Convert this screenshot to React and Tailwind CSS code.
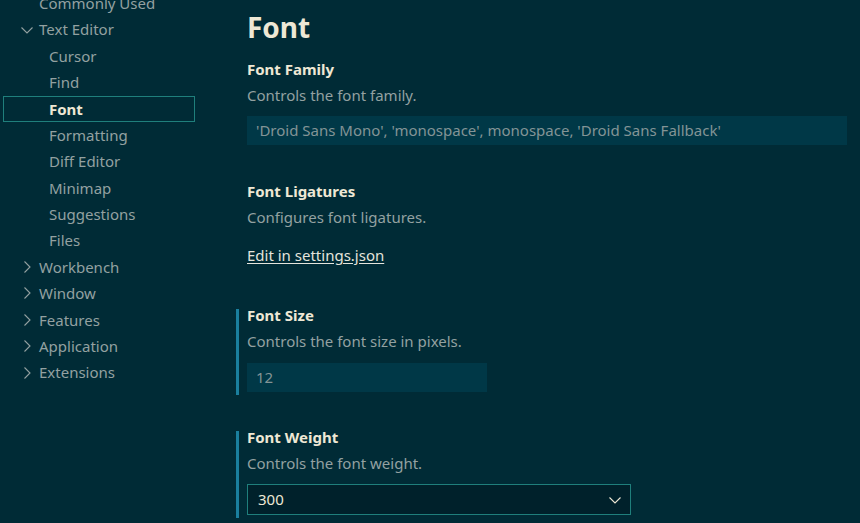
const tree = [
  { label: "Commonly Used", level: 0, chevron: null },
  { label: "Text Editor", level: 0, chevron: "down" },
  { label: "Cursor", level: 1 },
  { label: "Find", level: 1 },
  { label: "Font", level: 1, selected: true },
  { label: "Formatting", level: 1 },
  { label: "Diff Editor", level: 1 },
  { label: "Minimap", level: 1 },
  { label: "Suggestions", level: 1 },
  { label: "Files", level: 1 },
  { label: "Workbench", level: 0, chevron: "right" },
  { label: "Window", level: 0, chevron: "right" },
  { label: "Features", level: 0, chevron: "right" },
  { label: "Application", level: 0, chevron: "right" },
  { label: "Extensions", level: 0, chevron: "right" },
];

function Chevron({ dir, color = "#93a1a1" }) {
  return (
    <svg width="16" height="16" viewBox="0 0 16 16" className="shrink-0">
      {dir === "down" ? (
        <path d="M2.5 5.5 L8 11 L13.5 5.5" fill="none" stroke={color} strokeWidth="1.1" />
      ) : (
        <path d="M5.5 2.5 L11 8 L5.5 13.5" fill="none" stroke={color} strokeWidth="1.1" />
      )}
    </svg>
  );
}

function Sidebar() {
  return (
    <div className="-mt-[10px] w-[220px] shrink-0 pl-[3px]">
      {tree.map((item) => (
        <div
          key={item.label}
          className={
            "flex h-[26.4px] w-[192px] items-center border " +
            (item.selected ? "border-[#1f7f7c]" : "border-transparent")
          }
        >
          {item.level === 0 ? (
            <div className="flex items-center pl-[15px]">
              <div className="w-[20px]">{item.chevron ? <Chevron dir={item.chevron} /> : null}</div>
              <span className="text-[#93a1a1]">{item.label}</span>
            </div>
          ) : (
            <span
              className={
                "pl-[45px] " +
                (item.selected ? "font-bold text-[#eee8d5]" : "text-[#93a1a1]")
              }
            >
              {item.label}
            </span>
          )}
        </div>
      ))}
    </div>
  );
}

function Setting({ title, desc, modified, className, children }) {
  return (
    <div className={"flex " + (className || "")}>
      <div className={"mt-[4px] w-[3px] shrink-0 " + (modified ? "bg-[#1a7f9e]" : "")} />
      <div className={"flex-1 pl-[8px] " + (modified ? "pb-[3px]" : "")}>
        <div className="text-[15px] font-bold leading-[20px] text-[#eee8d5]">{title}</div>
        <div className="mt-[6px] leading-[20px] text-[#93a1a1]">{desc}</div>
        {children}
      </div>
    </div>
  );
}

export default function App() {
  return (
    <div
      className="flex h-[523px] w-[860px] overflow-hidden bg-[#002b36] text-[15px]"
      style={{ fontFamily: '"Noto Sans", "Open Sans", sans-serif' }}
    >
      <Sidebar />
      <div className="flex-1 pl-[16px] pr-[13px]">
        <div className="pl-[11px] pt-[8px] text-[28px] font-bold leading-[38px] text-[#eee8d5]">Font</div>

        <Setting className="pt-[13px]" title="Font Family" desc="Controls the font family.">
          <div className="mt-[11px] flex h-[29px] items-center bg-[#003847] px-[9px] text-[#839496]">
            'Droid Sans Mono', 'monospace', monospace, 'Droid Sans Fallback'
          </div>
        </Setting>

        <Setting className="pt-[36px]" title="Font Ligatures" desc="Configures font ligatures.">
          <div className="mt-[18px] leading-[20px] text-[#e4e4dc] underline underline-offset-2">
            Edit in settings.json
          </div>
        </Setting>

        <Setting className="mt-[40px]" title="Font Size" desc="Controls the font size in pixels." modified>
          <div className="mt-[12px] flex h-[29px] w-[240px] items-center bg-[#003847] px-[9px] text-[#839496]">
            12
          </div>
        </Setting>

        <Setting className="mt-[32px]" title="Font Weight" desc="Controls the font weight." modified>
          <div className="mt-[11px] flex h-[31px] w-[384px] items-center justify-between border border-[#1f7f7c] bg-[#00212b] pl-[10px] pr-[7px] text-[#eee8d5]">
            <span>300</span>
            <Chevron dir="down" color="#eee8d5" />
          </div>
        </Setting>
      </div>
    </div>
  );
}
